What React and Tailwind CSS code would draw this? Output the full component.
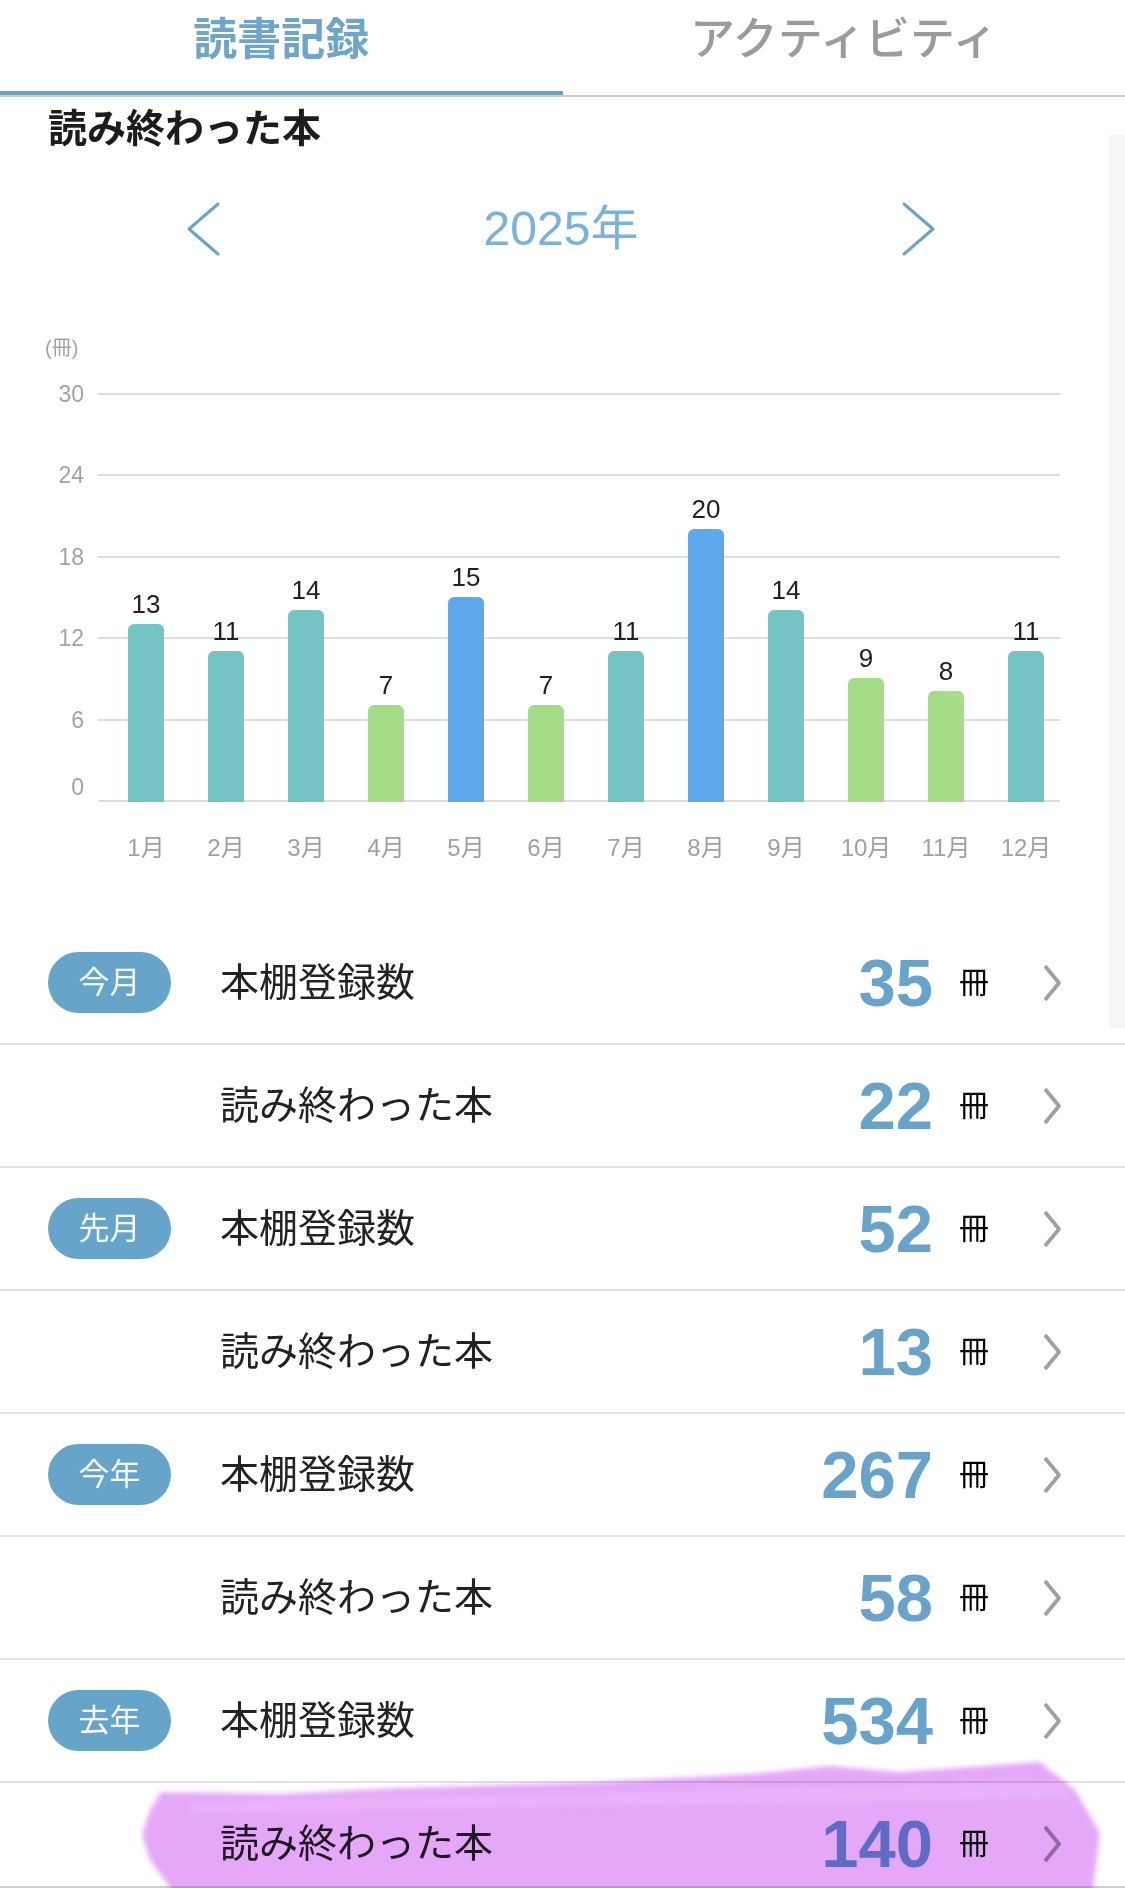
import React from 'react'

const months = [13, 11, 14, 7, 15, 7, 11, 20, 14, 9, 8, 11]
const ticks = [30, 24, 18, 12, 6, 0]
const PLOT_H = 409
const UNIT = (PLOT_H - 2) / 30

const rows = [
  { badge: '今月', label: '本棚登録数', n: 35 },
  { label: '読み終わった本', n: 22 },
  { badge: '先月', label: '本棚登録数', n: 52 },
  { label: '読み終わった本', n: 13 },
  { badge: '今年', label: '本棚登録数', n: 267 },
  { label: '読み終わった本', n: 58 },
  { badge: '去年', label: '本棚登録数', n: 534 },
  { label: '読み終わった本', n: 140 },
]

function barColor(v) {
  if (v >= 15) return 'bg-[#5ea9ec]'
  if (v >= 10) return 'bg-[#75c4c3]'
  return 'bg-[#a4dc87]'
}

function Chevron({ dir = 'right', className = '' }) {
  const pts = dir === 'left' ? '38,4 9,29 38,54' : '4,4 33,29 4,54'
  return (
    <svg viewBox="0 0 42 58" className={className}>
      <polyline points={pts} fill="none" stroke="#6aa3cb" strokeWidth="3" strokeLinecap="round" strokeLinejoin="round" />
    </svg>
  )
}

function RowArrow() {
  return (
    <svg viewBox="0 0 22 40" className="h-[40px] w-[22px]">
      <polyline points="4,3 18,20 4,37" fill="none" stroke="#a0a0a0" strokeWidth="3.8" strokeLinejoin="round" />
    </svg>
  )
}

export default function App() {
  return (
    <div className="relative h-[1888px] w-[1125px] overflow-hidden bg-white font-['Liberation_Sans','Noto_Sans_CJK_JP',sans-serif] text-[#222]">
      {/* tabs */}
      <div className="flex border-b-2 border-[#cdcdcd]">
        <div className="flex h-[95px] flex-1 justify-center border-b-4 border-[#6aa3c8] pt-[18px]">
          <span className="text-[44px] leading-[44px] font-bold text-[#6ea6c9]">読書記録</span>
        </div>
        <div className="flex h-[95px] flex-1 justify-center pt-[18px]">
          <span className="text-[45px] leading-[44px] font-medium text-[#9b9b9b]">アクティビティ</span>
        </div>
      </div>

      {/* scroll indicator */}
      <div className="absolute right-0 top-[135px] h-[893px] w-[16px] bg-[#f6f6f6]" />

      <h1 className="mt-[12px] pl-[48px] text-[39px] leading-[39px] font-bold text-[#1c1c1c]">読み終わった本</h1>

      {/* year switcher */}
      <div className="mt-[51px] flex h-[60px] items-center pl-[180px] pr-[183px]">
        <Chevron dir="left" className="h-[58px] w-[42px]" />
        <div className="flex-1 text-center text-[48px] leading-none text-[#7ab2dc]">2025年</div>
        <Chevron dir="right" className="h-[58px] w-[42px]" />
      </div>

      {/* chart */}
      <div className="mt-[79px] pl-[45px] text-[20px] leading-[20px] text-[#a3a3a3]">(冊)</div>
      <div className="mt-[35px] flex">
        <div className="relative h-[409px] w-[98px]">
          {ticks.map((t, i) => (
            <span
              key={t}
              className="absolute right-[14px] -translate-y-1/2 text-[23px] leading-none text-[#a3a3a3]"
              style={{ top: i * ((PLOT_H - 2) / 5) + 1 - (t === 0 ? 14 : 0) }}
            >
              {t}
            </span>
          ))}
        </div>
        <div className="relative h-[409px] w-[962px]">
          <div className="absolute inset-0 flex flex-col justify-between">
            {ticks.map((t) => (
              <div key={t} className="h-[2px] bg-[#dedede]" />
            ))}
          </div>
          <div className="absolute bottom-0 left-0 top-0 flex items-end pl-[8px]">
            {months.map((v, i) => (
              <div key={i} className="flex w-[80px] shrink-0 flex-col items-center">
                <span className="mb-[7px] text-[26px] leading-none text-[#1f1f1f]">{v}</span>
                <div className={`w-[36px] rounded-t-[6px] ${barColor(v)}`} style={{ height: v * UNIT + 2 }} />
              </div>
            ))}
          </div>
        </div>
      </div>
      <div className="mt-[34px] flex pl-[106px]">
        {months.map((_, i) => (
          <div key={i} className="w-[80px] shrink-0 text-center text-[24px] leading-[24px] text-[#a0a0a0]">
            {i + 1}月
          </div>
        ))}
      </div>

      {/* summary list */}
      <div className="mt-[62px]">
        {rows.map((r, i) => (
          <div key={i} className="flex h-[123px] items-center border-b-2 border-[#e2e2e2] pl-[48px] pr-[62px]">
            {r.badge ? (
              <div className="flex h-[61px] w-[123px] items-center justify-center rounded-full bg-[#66a4ca] text-[31px] leading-none text-[#f4f8fb]">
                {r.badge}
              </div>
            ) : (
              <div className="w-[123px]" />
            )}
            <div className="ml-[49px] text-[39px] leading-none text-[#222]">{r.label}</div>
            <div className="flex-1 text-right text-[67px] leading-none font-bold text-[#68a4ca]">{r.n}</div>
            <div className="ml-[26px] w-[30px] text-[30px] leading-none text-black">冊</div>
            <div className="ml-[52px] flex">
              <RowArrow />
            </div>
          </div>
        ))}
      </div>

      <div className="absolute bottom-0 left-0 right-0 h-[2px] bg-[#cfcfcf]" />

      {/* highlighter stroke */}
      <svg
        viewBox="0 0 990 138"
        className="pointer-events-none absolute left-[130px] top-[1750px] h-[138px] w-[990px] mix-blend-multiply"
      >
        <defs>
          <filter id="soft" x="-5%" y="-20%" width="110%" height="140%">
            <feGaussianBlur stdDeviation="2.5" />
          </filter>
        </defs>
        <polygon
          points="31,42 150,44 270,38 470,32 620,24 700,16 770,22 910,12 945,40 970,83 963,140 42,140 20,110 12,85 20,60"
          fill="#e5a8f9"
          filter="url(#soft)"
        />
        <polygon points="60,52 600,40 930,30 940,48 300,58 60,62" fill="#ecbcfb" opacity="0.5" filter="url(#soft)" />
      </svg>
    </div>
  )
}
